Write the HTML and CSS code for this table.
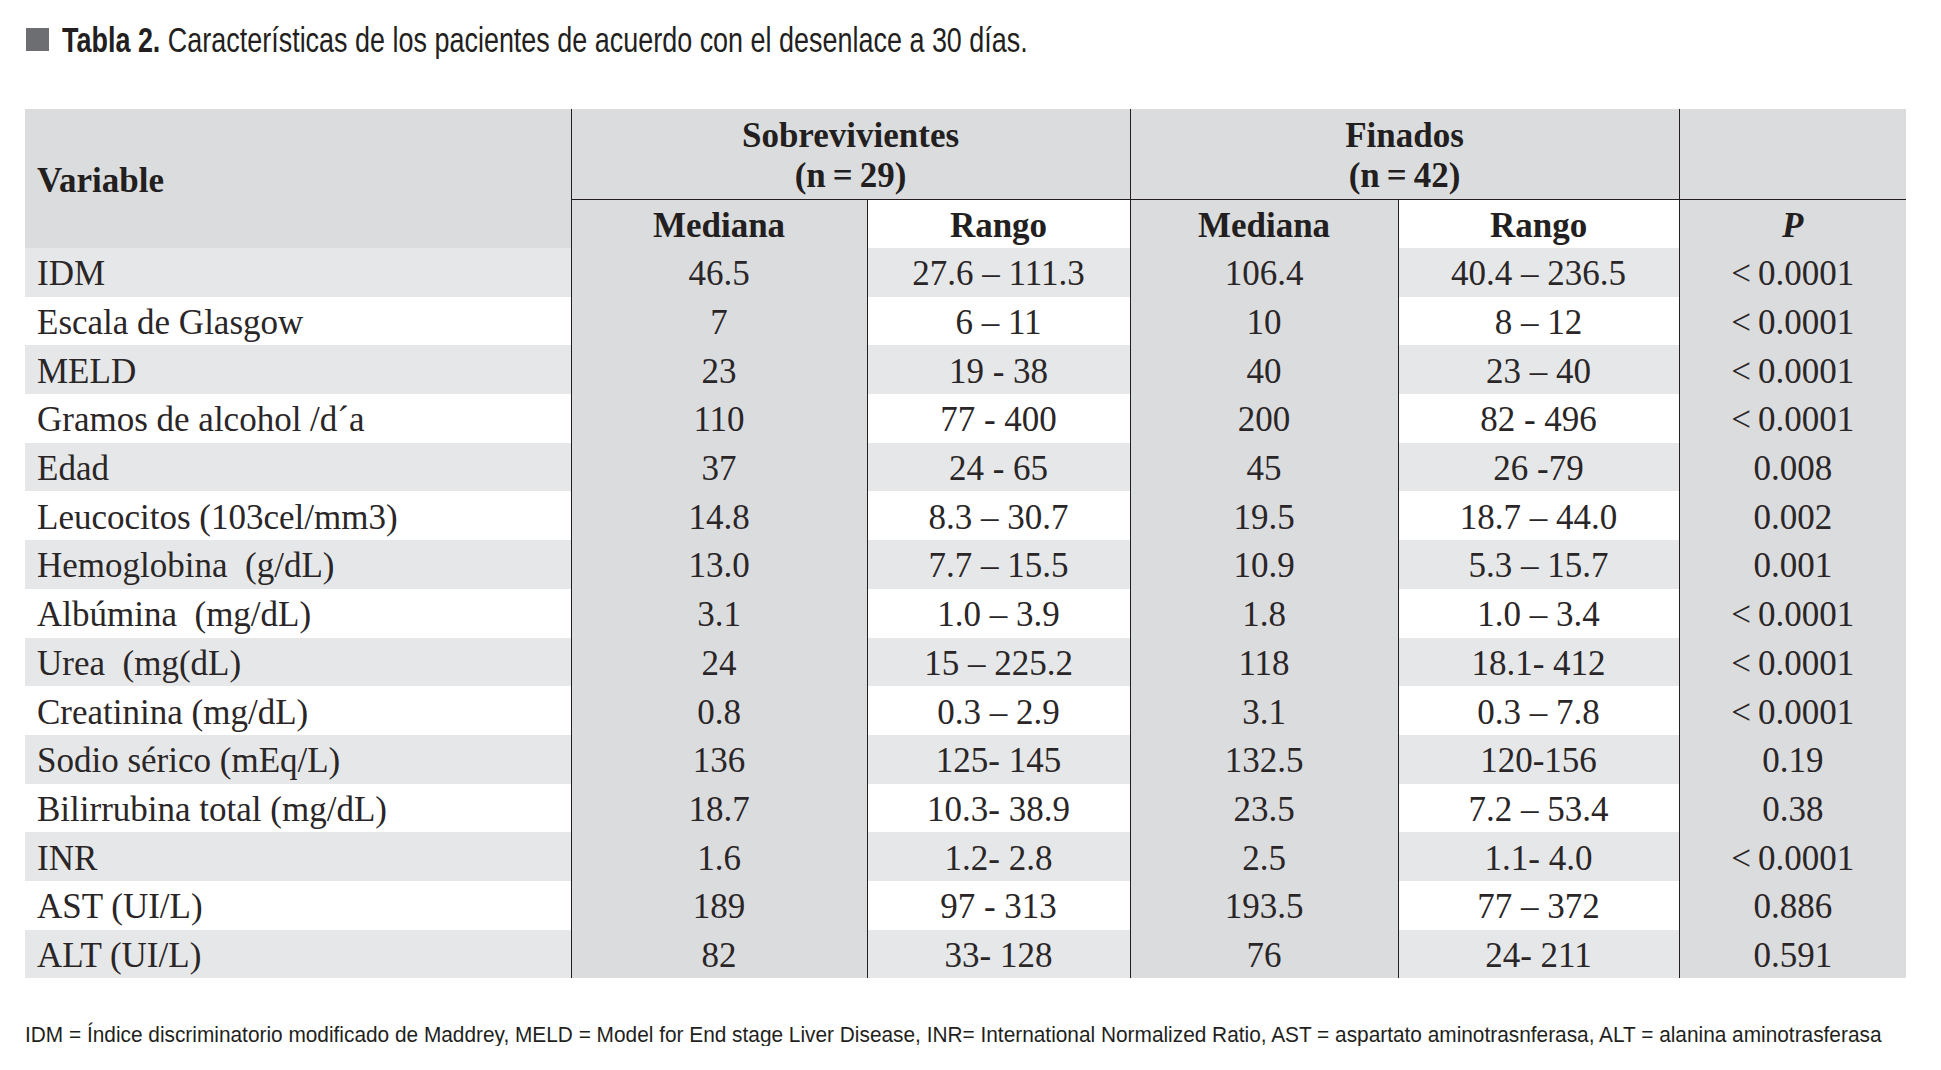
FILE: index.html
```html
<!DOCTYPE html>
<html lang="es">
<head>
<meta charset="utf-8">
<title>Tabla 2</title>
<link rel="stylesheet" href="styles.css">
</head>
<body>
<div class="page">
  <div class="title">
    <span class="title-mark"></span>
    <span class="title-text"><b>Tabla 2.</b> Características de los pacientes de acuerdo con el desenlace a 30 días.</span>
  </div>

  <table class="tbl">
    <colgroup>
      <col class="w-var">
      <col class="w-med">
      <col class="w-rng">
      <col class="w-med2">
      <col class="w-rng2">
      <col class="w-p">
    </colgroup>
    <thead>
      <tr class="h1">
        <th rowspan="2" class="var">Variable</th>
        <th colspan="2" class="grp">Sobrevivientes<br>(n&thinsp;=&thinsp;29)</th>
        <th colspan="2" class="grp">Finados<br>(n&thinsp;=&thinsp;42)</th>
        <th class="grp"></th>
      </tr>
      <tr class="h2">
        <th class="med">Mediana</th>
        <th class="rng">Rango</th>
        <th class="med">Mediana</th>
        <th class="rng">Rango</th>
        <th class="med pval">P</th>
      </tr>
    </thead>
    <tbody>
      <tr class="alt"><td class="var">IDM</td><td class="med">46.5</td><td class="rng">27.6 – 111.3</td><td class="med">106.4</td><td class="rng">40.4 – 236.5</td><td class="med">&lt;&thinsp;0.0001</td></tr>
      <tr><td class="var">Escala de Glasgow</td><td class="med">7</td><td class="rng">6 – 11</td><td class="med">10</td><td class="rng">8 – 12</td><td class="med">&lt;&thinsp;0.0001</td></tr>
      <tr class="alt"><td class="var">MELD</td><td class="med">23</td><td class="rng">19 - 38</td><td class="med">40</td><td class="rng">23 – 40</td><td class="med">&lt;&thinsp;0.0001</td></tr>
      <tr><td class="var">Gramos de alcohol /d´a</td><td class="med">110</td><td class="rng">77 - 400</td><td class="med">200</td><td class="rng">82 - 496</td><td class="med">&lt;&thinsp;0.0001</td></tr>
      <tr class="alt"><td class="var">Edad</td><td class="med">37</td><td class="rng">24 - 65</td><td class="med">45</td><td class="rng">26 -79</td><td class="med">0.008</td></tr>
      <tr><td class="var">Leucocitos (103cel/mm3)</td><td class="med">14.8</td><td class="rng">8.3 – 30.7</td><td class="med">19.5</td><td class="rng">18.7 – 44.0</td><td class="med">0.002</td></tr>
      <tr class="alt"><td class="var">Hemoglobina&nbsp; (g/dL)</td><td class="med">13.0</td><td class="rng">7.7 – 15.5</td><td class="med">10.9</td><td class="rng">5.3 – 15.7</td><td class="med">0.001</td></tr>
      <tr><td class="var">Albúmina&nbsp; (mg/dL)</td><td class="med">3.1</td><td class="rng">1.0 – 3.9</td><td class="med">1.8</td><td class="rng">1.0 – 3.4</td><td class="med">&lt;&thinsp;0.0001</td></tr>
      <tr class="alt"><td class="var">Urea&nbsp; (mg(dL)</td><td class="med">24</td><td class="rng">15 – 225.2</td><td class="med">118</td><td class="rng">18.1- 412</td><td class="med">&lt;&thinsp;0.0001</td></tr>
      <tr><td class="var">Creatinina (mg/dL)</td><td class="med">0.8</td><td class="rng">0.3 – 2.9</td><td class="med">3.1</td><td class="rng">0.3 – 7.8</td><td class="med">&lt;&thinsp;0.0001</td></tr>
      <tr class="alt"><td class="var">Sodio sérico (mEq/L)</td><td class="med">136</td><td class="rng">125- 145</td><td class="med">132.5</td><td class="rng">120-156</td><td class="med">0.19</td></tr>
      <tr><td class="var">Bilirrubina total (mg/dL)</td><td class="med">18.7</td><td class="rng">10.3- 38.9</td><td class="med">23.5</td><td class="rng">7.2 – 53.4</td><td class="med">0.38</td></tr>
      <tr class="alt"><td class="var">INR</td><td class="med">1.6</td><td class="rng">1.2- 2.8</td><td class="med">2.5</td><td class="rng">1.1- 4.0</td><td class="med">&lt;&thinsp;0.0001</td></tr>
      <tr><td class="var">AST (UI/L)</td><td class="med">189</td><td class="rng">97 - 313</td><td class="med">193.5</td><td class="rng">77 – 372</td><td class="med">0.886</td></tr>
      <tr class="alt"><td class="var">ALT (UI/L)</td><td class="med">82</td><td class="rng">33- 128</td><td class="med">76</td><td class="rng">24- 211</td><td class="med">0.591</td></tr>
    </tbody>
  </table>

  <p class="note"><span class="note-text">IDM = Índice discriminatorio modificado de Maddrey, MELD = Model for End stage Liver Disease, INR= International Normalized Ratio, AST = aspartato aminotrasnferasa, ALT = alanina aminotrasferasa</span></p>
</div>
</body>
</html>
```

FILE: styles.css
```css
html, body {
  margin: 0;
  padding: 0;
  background: #ffffff;
}

.page {
  padding: 22px 0 0 25px;
  color: #231f20;
}

.title {
  display: flex;
  align-items: center;
  height: 35px;
  white-space: nowrap;
}

.title-mark {
  flex: none;
  width: 23px;
  height: 23px;
  margin-left: 1px;
  background: #6d6e71;
}

.title-text {
  display: inline-block;
  margin-left: 13px;
  font-family: "Liberation Sans", Arial, sans-serif;
  font-size: 35px;
  line-height: 35px;
  transform: scaleX(0.77);
  transform-origin: left center;
}

.title-text b {
  font-weight: 700;
}

.tbl {
  margin-top: 52px;
  width: 1881px;
  table-layout: fixed;
  border-collapse: collapse;
  border-spacing: 0;
  font-family: "Liberation Serif", "Times New Roman", serif;
  font-size: 35px;
  line-height: 40px;
  color: #2a2627;
}

.w-var { width: 546px; }
.w-med { width: 296px; }
.w-rng { width: 263px; }
.w-med2 { width: 268px; }
.w-rng2 { width: 281px; }
.w-p { width: 227px; }

.tbl th,
.tbl td {
  padding: 4px 0 0 0;
  vertical-align: middle;
  text-align: center;
  white-space: nowrap;
}

.tbl th {
  font-weight: 700;
  background: #dbdcde;
  color: #231f20;
}

.tbl .h1 th {
  height: 86px;
}

.tbl .h1 th.grp {
  border-left: 1px solid #231f20;
  border-bottom: 1px solid #231f20;
}

.tbl .h2 th {
  height: 44px;
  border-left: 1px solid #231f20;
}

.tbl th.var,
.tbl td.var {
  text-align: left;
  padding-left: 12px;
}

.tbl th.rng {
  background: #ffffff;
}

.tbl th.pval {
  font-style: italic;
}

.tbl td {
  height: 44.7px;
  background: #ffffff;
}

.tbl tr.alt td {
  background: #e6e7e8;
}

.tbl td.med,
.tbl tr.alt td.med {
  background: #dbdcde;
}

.tbl td.med,
.tbl td.rng {
  border-left: 1px solid #231f20;
}

.note {
  margin: 46px 0 0 0;
  white-space: nowrap;
}

.note-text {
  display: inline-block;
  font-family: "Liberation Sans", Arial, sans-serif;
  font-size: 22px;
  line-height: 22px;
  transform: scaleX(0.947);
  transform-origin: left center;
}
```
